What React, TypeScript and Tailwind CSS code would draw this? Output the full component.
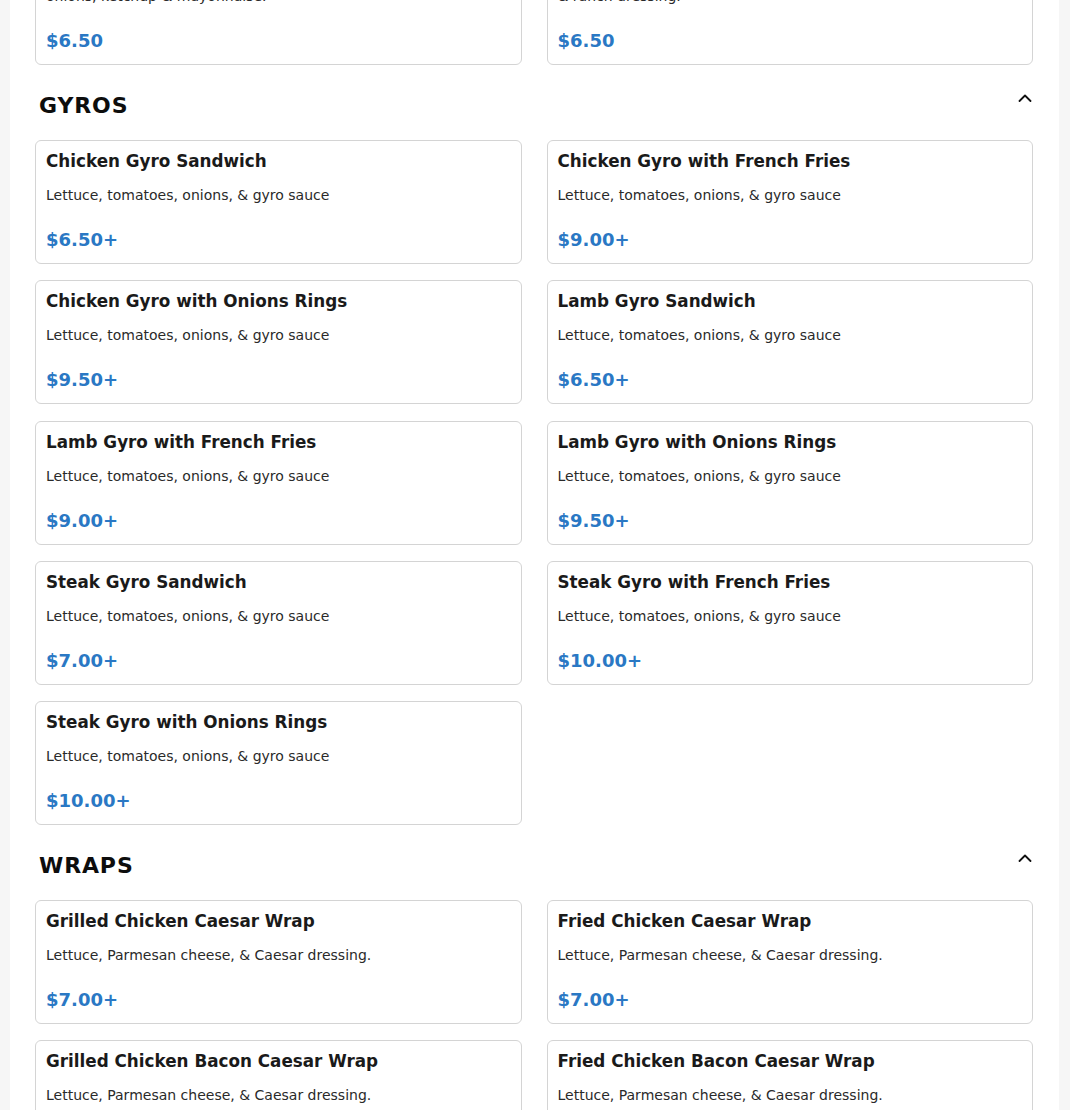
import React from "react";

type Item = { name: string; desc: React.ReactNode; price: string };

const gyros: Item[] = [
  { name: "Chicken Gyro Sandwich", desc: "Lettuce, tomatoes, onions, & gyro sauce", price: "$6.50+" },
  { name: "Chicken Gyro with French Fries", desc: "Lettuce, tomatoes, onions, & gyro sauce", price: "$9.00+" },
  { name: "Chicken Gyro with Onions Rings", desc: "Lettuce, tomatoes, onions, & gyro sauce", price: "$9.50+" },
  { name: "Lamb Gyro Sandwich", desc: "Lettuce, tomatoes, onions, & gyro sauce", price: "$6.50+" },
  { name: "Lamb Gyro with French Fries", desc: "Lettuce, tomatoes, onions, & gyro sauce", price: "$9.00+" },
  { name: "Lamb Gyro with Onions Rings", desc: "Lettuce, tomatoes, onions, & gyro sauce", price: "$9.50+" },
  { name: "Steak Gyro Sandwich", desc: "Lettuce, tomatoes, onions, & gyro sauce", price: "$7.00+" },
  { name: "Steak Gyro with French Fries", desc: "Lettuce, tomatoes, onions, & gyro sauce", price: "$10.00+" },
  { name: "Steak Gyro with Onions Rings", desc: "Lettuce, tomatoes, onions, & gyro sauce", price: "$10.00+" },
];

const wraps: Item[] = [
  { name: "Grilled Chicken Caesar Wrap", desc: "Lettuce, Parmesan cheese, & Caesar dressing.", price: "$7.00+" },
  { name: "Fried Chicken Caesar Wrap", desc: "Lettuce, Parmesan cheese, & Caesar dressing.", price: "$7.00+" },
  { name: "Grilled Chicken Bacon Caesar Wrap", desc: "Lettuce, Parmesan cheese, & Caesar dressing.", price: "$7.50+" },
  { name: "Fried Chicken Bacon Caesar Wrap", desc: "Lettuce, Parmesan cheese, & Caesar dressing.", price: "$7.50+" },
];

// the section above, scrolled mostly out of view
const previous: Item[] = [
  {
    name: "Hamburger",
    desc: (
      <>
        Lettuce, tomatoes, pickles,
        <br />
        onions, ketchup &amp; mayonnaise.
      </>
    ),
    price: "$6.50",
  },
  {
    name: "Chicken Wrap",
    desc: (
      <>
        Lettuce, tomatoes, cheese,
        <br />
        &amp; ranch dressing.
      </>
    ),
    price: "$6.50",
  },
];

function Card({ item }: { item: Item }) {
  return (
    <div className="rounded-[6px] border border-[#d4d4d4] bg-white px-[10px] pt-[8px] pb-[10px]">
      <h3 className="text-[16.8px] font-bold leading-[24px] text-[#1a1a1a]">{item.name}</h3>
      <p className="mt-[12px] text-[14px] leading-[20px] text-[#2a2a2a]">{item.desc}</p>
      <p className="mt-[22px] text-[18px] font-bold leading-[26px] text-[#2a78c4]">{item.price}</p>
    </div>
  );
}

function Chevron() {
  return (
    <svg viewBox="0 0 14 8" className="h-[8px] w-[14px]" fill="none" stroke="#111" strokeWidth="1.8">
      <path d="M1.5 7 7 1.5 12.5 7" strokeLinecap="round" strokeLinejoin="round" />
    </svg>
  );
}

function Section({ title, items }: { title: string; items: Item[] }) {
  return (
    <section>
      <div className="mt-[26px] mb-[19px] flex items-start justify-between pl-[4px] pr-[1px]">
        <h2 className="text-[22px] font-bold leading-[30px] tracking-[0.04em] text-[#0d0d0d]">{title}</h2>
        <div className="pt-[3px]">
          <Chevron />
        </div>
      </div>
      <div className="grid grid-cols-2 gap-x-[25px] gap-y-[16.3px]">
        {items.map((it) => (
          <Card key={it.name} item={it} />
        ))}
      </div>
    </section>
  );
}

export default function App() {
  return (
    <div
      className="flex h-[1110px] overflow-hidden bg-[#f6f6f6] pl-[10px] pr-[11px]"
      style={{ fontFamily: '"DejaVu Sans", Verdana, sans-serif' }}
    >
      <div className="flex-1 bg-white pl-[25px] pr-[26px]">
        <div className="-mt-[79px]">
          <div className="grid grid-cols-2 gap-x-[25px]">
            {previous.map((it) => (
              <Card key={it.name} item={it} />
            ))}
          </div>
          <Section title="GYROS" items={gyros} />
          <Section title="WRAPS" items={wraps} />
        </div>
      </div>
    </div>
  );
}
